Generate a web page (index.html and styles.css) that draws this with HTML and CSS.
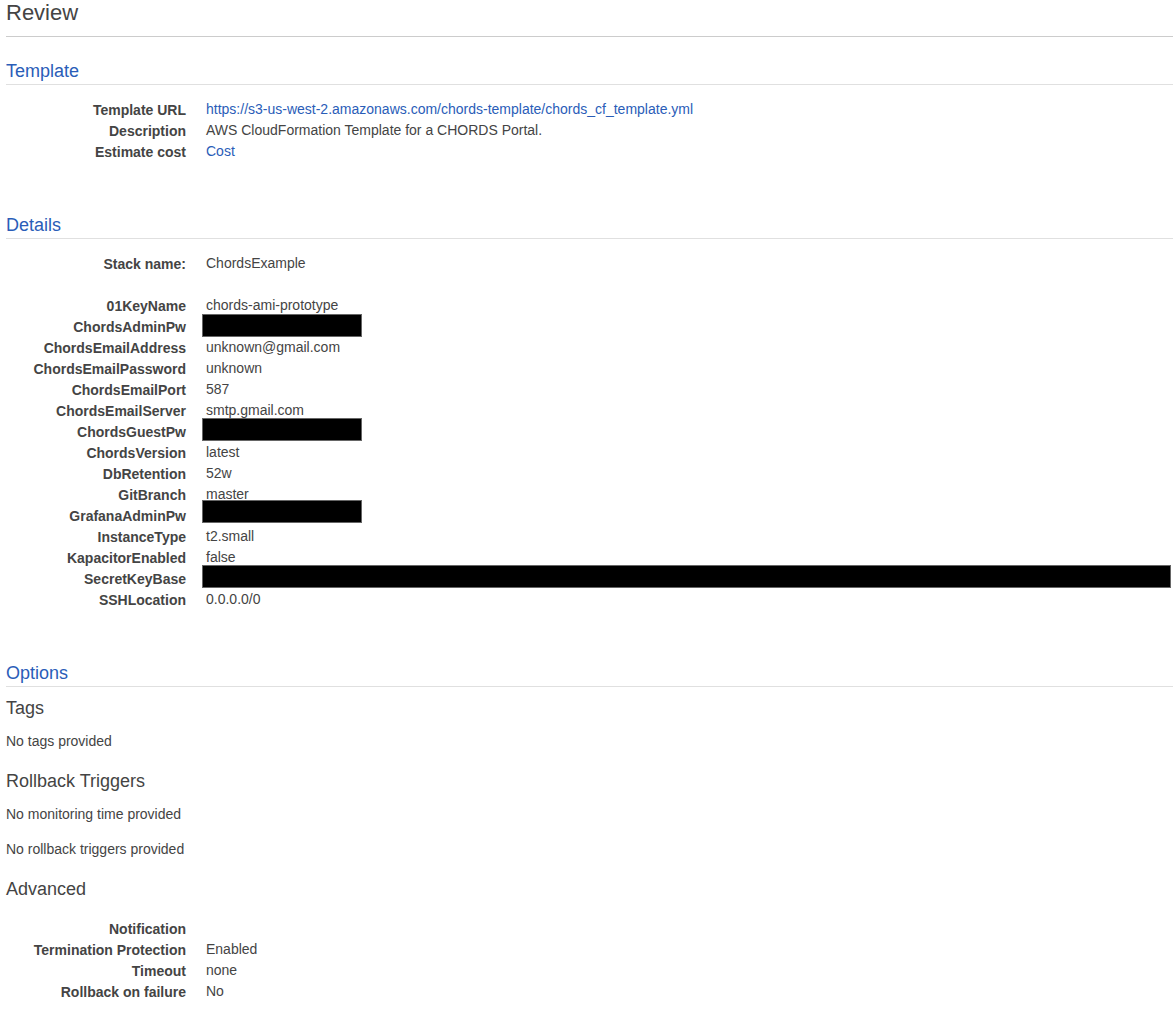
FILE: index.html
```html
<!DOCTYPE html>
<html lang="en">
<head>
<meta charset="utf-8">
<meta name="viewport" content="width=device-width, initial-scale=1">
<title>Review</title>
<link rel="stylesheet" href="styles.css">
</head>
<body>
<main class="review">
  <h1 class="page-title">Review</h1>

  <section class="section">
    <h2 class="section-title"><a href="#template">Template</a></h2>
    <dl class="fields">
      <dt>Template URL</dt><dd><a href="https://s3-us-west-2.amazonaws.com/chords-template/chords_cf_template.yml">https://s3-us-west-2.amazonaws.com/chords-template/chords_cf_template.yml</a></dd>
      <dt>Description</dt><dd>AWS CloudFormation Template for a CHORDS Portal.</dd>
      <dt>Estimate cost</dt><dd><a href="#cost">Cost</a></dd>
    </dl>
  </section>

  <section class="section">
    <h2 class="section-title"><a href="#details">Details</a></h2>
    <dl class="fields">
      <dt>Stack name:</dt><dd>ChordsExample</dd>
    </dl>
    <dl class="fields parameters">
      <dt>01KeyName</dt><dd>chords-ami-prototype</dd>
      <dt>ChordsAdminPw</dt><dd><span class="redacted admin"></span></dd>
      <dt>ChordsEmailAddress</dt><dd>unknown@gmail.com</dd>
      <dt>ChordsEmailPassword</dt><dd>unknown</dd>
      <dt>ChordsEmailPort</dt><dd>587</dd>
      <dt>ChordsEmailServer</dt><dd>smtp.gmail.com</dd>
      <dt>ChordsGuestPw</dt><dd><span class="redacted guest"></span></dd>
      <dt>ChordsVersion</dt><dd>latest</dd>
      <dt>DbRetention</dt><dd>52w</dd>
      <dt>GitBranch</dt><dd>master</dd>
      <dt>GrafanaAdminPw</dt><dd><span class="redacted grafana"></span></dd>
      <dt>InstanceType</dt><dd>t2.small</dd>
      <dt>KapacitorEnabled</dt><dd>false</dd>
      <dt>SecretKeyBase</dt><dd><span class="redacted secret"></span></dd>
      <dt>SSHLocation</dt><dd>0.0.0.0/0</dd>
    </dl>
  </section>

  <section class="section">
    <h2 class="section-title"><a href="#options">Options</a></h2>
    <h3 class="group-title">Tags</h3>
    <p class="note">No tags provided</p>
    <h3 class="group-title">Rollback Triggers</h3>
    <p class="note">No monitoring time provided</p>
    <p class="note">No rollback triggers provided</p>
    <h3 class="group-title">Advanced</h3>
    <dl class="fields">
      <dt>Notification</dt><dd></dd>
      <dt>Termination Protection</dt><dd>Enabled</dd>
      <dt>Timeout</dt><dd>none</dd>
      <dt>Rollback on failure</dt><dd>No</dd>
    </dl>
  </section>
</main>
</body>
</html>
```
FILE: styles.css
```css
* {
  box-sizing: border-box;
}

body {
  margin: 0;
  background: #fff;
  color: #444;
  font: 14px/21px "Liberation Sans", Arial, sans-serif;
}

a {
  color: #2a5db8;
  text-decoration: none;
}

a:hover {
  text-decoration: underline;
}

.review {
  padding: 0 0 32px 6px;
}

.page-title {
  margin: 0 0 22px;
  padding-bottom: 10px;
  border-bottom: 1px solid #ccc;
  font-size: 22px;
  font-weight: 400;
  line-height: 26px;
}

.section + .section {
  margin-top: 50px;
}

.section-title {
  margin: 0;
  padding-bottom: 1px;
  border-bottom: 1px solid #e0e0e0;
  font-size: 18px;
  font-weight: 400;
  line-height: 24px;
}

.fields {
  display: grid;
  grid-template-columns: 180px minmax(0, 1fr);
  grid-auto-rows: minmax(21px, auto);
  column-gap: 20px;
  margin: 15px 0 0;
}

.fields dt {
  font-weight: 700;
  text-align: right;
}

.fields dd {
  position: relative;
  margin: 0;
  line-height: 19px;
  overflow-wrap: anywhere;
}

.parameters {
  margin-top: 21px;
}

/* Blackout bars that lie over the secret values */
.redacted {
  position: absolute;
  left: -4px;
  width: 160px;
  height: 23px;
  border: 1px solid #666;
  background: #000;
}

.admin {
  top: -3px;
}

.guest {
  top: -4px;
}

.grafana {
  top: -6px;
}

.secret {
  top: -4px;
  right: 2px;
  width: auto;
}

.group-title {
  margin: 17px 0 11px;
  font-size: 18px;
  font-weight: 400;
  line-height: 24px;
}

.section-title + .group-title {
  margin-top: 9px;
}

.note {
  margin: 0;
}

.note + .note {
  margin-top: 14px;
}

.group-title + .fields {
  margin-top: 18px;
}
```
